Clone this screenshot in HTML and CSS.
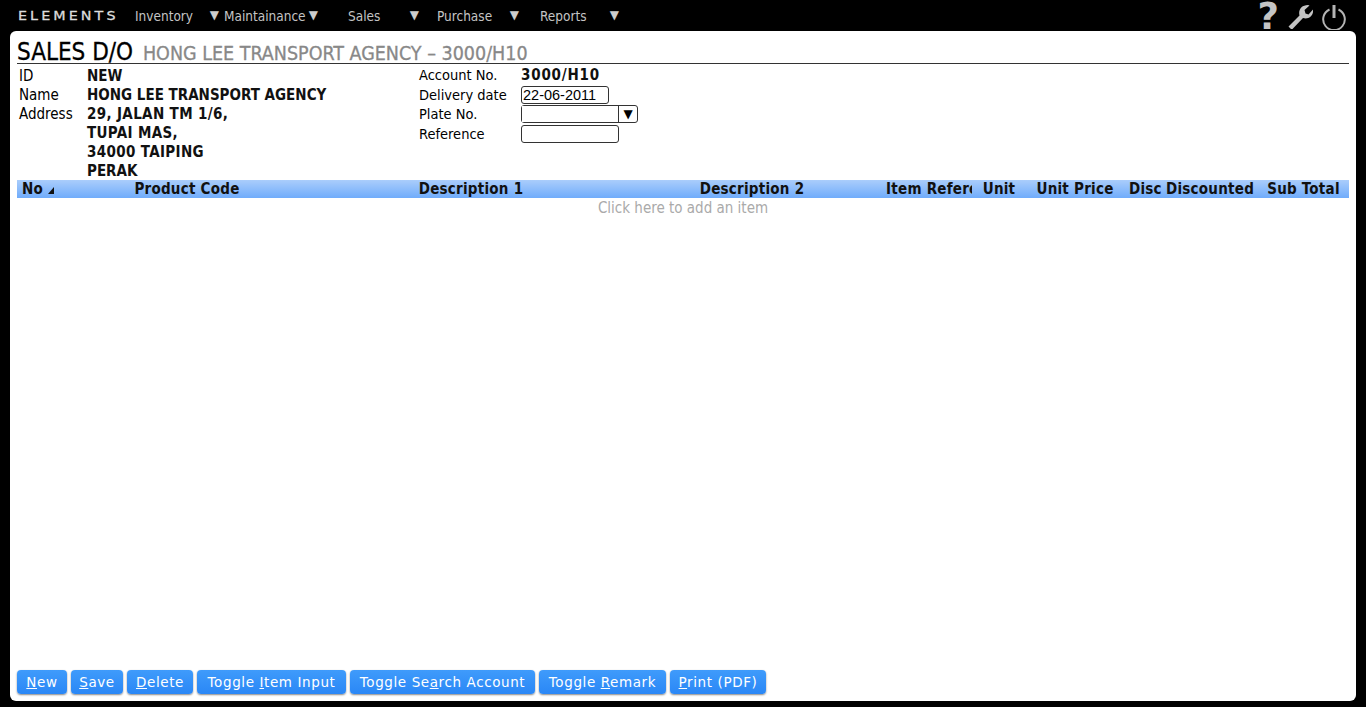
FILE: index.html
```html
<!DOCTYPE html>
<html lang="en">
<head>
  <meta charset="UTF-8" />
  <title>Sales D/O - Elements</title>
  <link rel="stylesheet" href="styles.css">
</head>
<body>
  <div class="topbar">
    <div class="logo">ELEMENTS</div>
    <ul class="menu">
      <li class="m-inventory"><span>Inventory</span><i>▼</i></li>
      <li class="m-maint"><span>Maintainance</span><i>▼</i></li>
      <li class="m-sales"><span>Sales</span><i>▼</i></li>
      <li class="m-purchase"><span>Purchase</span><i>▼</i></li>
      <li class="m-reports"><span>Reports</span><i>▼</i></li>
    </ul>
    <div class="tools">
      <span class="help">?</span>
      <svg width="25" height="24" viewBox="0 0 25 24"><path d="M3 24 L0.500 21.500 L11.500 10.500 C10 5 13.500 0 20 0 L21.500 0.500 L16.500 5 L17.500 8.500 L20.500 9.500 L25 4.500 C26 10.500 20.500 15 15 13 L4.500 24 Z" fill="#c4c4c4"/></svg>
      <svg width="24" height="25" viewBox="0 0 24 25"><path d="M7.500 4.500 A10.800 10.800 0 1 0 16.500 4.500" fill="none" stroke="#b4b4b4" stroke-width="2"/><path d="M12 0 V13" stroke="#b4b4b4" stroke-width="3"/></svg>
    </div>
  </div>

  <div class="panel">
    <h1>SALES D/O <small>HONG LEE TRANSPORT AGENCY – 3000/H10</small></h1>

    <div class="info">
      <table class="left">
        <tr><td class="lbl">ID</td><td class="val">NEW</td></tr>
        <tr><td class="lbl">Name</td><td class="val">HONG LEE TRANSPORT AGENCY</td></tr>
        <tr><td class="lbl">Address</td><td class="val wide">29, JALAN TM 1/6,</td></tr>
        <tr><td></td><td class="val wide">TUPAI MAS,</td></tr>
        <tr><td></td><td class="val wide">34000 TAIPING</td></tr>
        <tr><td></td><td class="val">PERAK</td></tr>
      </table>
      <div class="right">
        <div class="row"><label>Account No.</label><b>3000/H10</b></div>
        <div class="row"><label>Delivery date</label><input class="date" type="text" value="22-06-2011"></div>
        <div class="row"><label>Plate No.</label><div class="combo"><input type="text"><span>▼</span></div></div>
        <div class="row"><label>Reference</label><input class="ref" type="text"></div>
      </div>
    </div>

    <div class="grid-head">
      <div class="c-no">No <em></em></div>
      <div class="c-code">Product Code</div>
      <div class="c-d1">Description 1</div>
      <div class="c-d2">Description 2</div>
      <div class="c-ref">Item Reference</div>
      <div class="c-unit">Unit</div>
      <div class="c-price">Unit Price</div>
      <div class="c-disc">Disc</div>
      <div class="c-dtd">Discounted</div>
      <div class="c-sub">Sub Total</div>
    </div>
    <div class="add-item">Click here to add an item</div>

    <div class="buttons">
      <button class="b-new"><u>N</u>ew</button>
      <button class="b-save"><u>S</u>ave</button>
      <button class="b-del"><u>D</u>elete</button>
      <button class="b-item">Toggle <u>I</u>tem Input</button>
      <button class="b-search">Toggle Se<u>a</u>rch Account</button>
      <button class="b-remark">Toggle <u>R</u>emark</button>
      <button class="b-print"><u>P</u>rint (PDF)</button>
    </div>
  </div>
</body>
</html>
```

FILE: styles.css
```css
* {
  box-sizing: border-box;
}
body {
  margin: 0;
  height: 100vh;
  overflow: hidden;
  background: #000;
  font-family: "DejaVu Sans Condensed", "DejaVu Sans", sans-serif;
  font-size: 14.500px;
  color: #000;
  display: flex;
  flex-direction: column;
  padding: 0 10px 6px;
}
.topbar {
  height: 31px;
  flex: none;
  display: flex;
  align-items: flex-start;
  color: #c4c4c4;
}
.logo {
  font-family: "DejaVu Sans", sans-serif;
  font-size: 13px;
  line-height: 16px;
  letter-spacing: 2.800px;
  margin: 8px 0 0 8px;
  width: 117px;
  transform: scaleX(1.100);
  transform-origin: left;
  color: #ddd;
  -webkit-text-stroke: 0.300px #ddd;
  white-space: nowrap;
}
.menu {
  list-style: none;
  margin: 8px 0 0;
  padding: 0;
  display: flex;
  font-size: 13.500px;
  line-height: 16px;
}
.menu li {
  display: flex;
  justify-content: space-between;
}
.menu i {
  font-style: normal;
  font-family: "DejaVu Sans", sans-serif;
  font-size: 12px;
  line-height: 14px;
  color: #ccc;
}
.m-inventory { width: 84px; margin-right: 5px; }
.m-maint { width: 94px; margin-right: 30px; }
.m-sales { width: 71px; margin-right: 18px; }
.m-purchase { width: 82px; margin-right: 21px; }
.m-reports { width: 79px; }
.tools {
  margin-left: auto;
  margin-right: 10px;
  display: flex;
  align-items: flex-start;
  gap: 9px;
  padding-top: 5px;
}
.help {
  font-family: "DejaVu Sans", sans-serif;
  font-weight: bold;
  font-size: 37px;
  line-height: 30px;
  margin-top: -3px;
  color: #c4c4c4;
}
.panel {
  flex: 1;
  background: #fff;
  border-radius: 6px;
  padding: 0 7px 7px;
  display: flex;
  flex-direction: column;
  min-height: 0;
}
h1 {
  margin: 9px 0 0;
  height: 24px;
  font-size: 24px;
  line-height: 24px;
  font-weight: normal;
  border-bottom: 1px solid #333;
  white-space: nowrap;
  -webkit-text-stroke: 0.300px #000;
}
h1 small {
  font-size: 19.500px;
  font-weight: normal;
  color: #888;
  margin-left: 3px;
  -webkit-text-stroke: 0.300px #888;
}
.info {
  display: flex;
  height: 116px;
}
.left {
  border-collapse: collapse;
  width: 402px;
  align-self: flex-start;
  margin-top: 2px;
}
.left td {
  padding: 1px 0 0;
  height: 19px;
  line-height: 18px;
  font-size: 15px;
}
.left .lbl {
  width: 70px;
  padding-left: 2px;
}
.left .val {
  font-weight: bold;
  color: #111;
}
.wide {
  letter-spacing: 0.350px;
}
.right {
  padding-top: 1px;
}
.row {
  display: flex;
  align-items: center;
  height: 19.700px;
}
.row label {
  width: 102px;
}
.row b {
  font-size: 15px;
  letter-spacing: 0.800px;
  color: #111;
}
input {
  font-family: "Liberation Sans", Arial, sans-serif;
  font-size: 14.500px;
  height: 18px;
  padding: 0 1px;
  border: 1px solid #333;
  border-radius: 3px;
  background: #fff;
  outline: none;
}
.date { width: 88px; }
.ref { width: 98px; }
.combo {
  display: flex;
  height: 18px;
  width: 117px;
  border: 1px solid #333;
  border-radius: 3px;
}
.combo input {
  flex: 1;
  min-width: 0;
  height: 16px;
  border: 0;
  border-right: 1px solid #333;
  border-radius: 0;
}
.combo span {
  width: 18px;
  text-align: center;
  font-size: 12px;
  line-height: 16px;
  font-family: "DejaVu Sans", sans-serif;
}
.grid-head {
  flex: none;
  height: 18px;
  display: flex;
  background: linear-gradient(#aacdfb, #70acfb);
  font-size: 15px;
  letter-spacing: 0.250px;
  font-weight: bold;
  line-height: 19px;
  white-space: nowrap;
}
.grid-head div {
  overflow: hidden;
  text-align: center;
  color: #111;
}
.grid-head .c-no {
  flex: 0 0 35px;
  min-width: 0;
  text-align: left;
  padding-left: 5px;
  overflow: visible;
}
.c-no em {
  display: inline-block;
  width: 0;
  height: 0;
  border-left: 6px solid transparent;
  border-bottom: 7px solid #111;
}
.c-code { flex: 0 0 270px; }
.c-d1 { flex: 0 0 298px; }
.c-d2 { flex: 0 0 264px; }
.grid-head .c-ref {
  flex: 0 0 88px;
  text-align: left;
  padding-left: 2px;
}
.c-unit { flex: 0 0 54px; }
.c-price { flex: 0 0 98px; }
.grid-head .c-disc {
  flex: 0 0 38px;
  text-align: left;
  padding-left: 5px;
}
.c-dtd { flex: 0 0 96px; }
.c-sub { flex: 0 0 91px; }
.add-item {
  color: #aaa;
  font-size: 15px;
  text-align: center;
  line-height: 20px;
  flex: 1;
}
.buttons {
  display: flex;
  gap: 4px;
  flex: none;
}
button {
  font-family: "DejaVu Sans", sans-serif;
  font-size: 13.500px;
  letter-spacing: 0.600px;
  height: 24px;
  padding: 0;
  color: #fff;
  border: 0;
  border-radius: 4px;
  background: linear-gradient(#3f9bfb, #2a87f6);
  box-shadow: 0 1px 2px #888;
  text-align: center;
}
.b-new { width: 50px; }
.b-save { width: 52px; }
.b-del { width: 66px; }
.b-item { width: 149px; }
.b-search { width: 185px; }
.b-remark { width: 127px; }
.b-print { width: 96px; }
```
